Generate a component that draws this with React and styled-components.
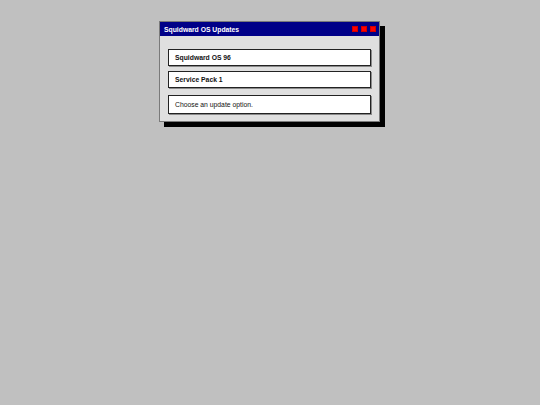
import React from 'react';
import styled, { createGlobalStyle } from 'styled-components';

const GlobalStyle = createGlobalStyle`
    html, body {
        margin: 0;
        padding: 0;
        background-color: #c0c0c0;
        font-family: "Liberation Sans", Arial, sans-serif;
    }
`;

const Page = styled.div`
    width: 540px;
    height: 405px;
    padding: 21px 0 0 159px;
    box-sizing: border-box;
`;

const Window = styled.div`
    width: 221px;
    box-sizing: border-box;
    background-color: #dfdfdf;
    border: 1px solid #7a7a7a;
    box-shadow: 5px 5px 0 #000;
`;

const TitleBar = styled.div`
    display: flex;
    justify-content: space-between;
    align-items: center;
    height: 14px;
    padding: 0 3px 0 4px;
    background-color: #000088;
    color: white;
    font-size: 6.8px;
    font-weight: bold;
`;

const Controls = styled.div`
    display: flex;
    gap: 3px;
`;

const Control = styled.span`
    width: 6px;
    height: 6px;
    background-color: #ff0000;
    box-shadow: inset 0 0 0 1px #d00000;
`;

const Body = styled.div`
    display: flex;
    flex-direction: column;
    gap: 5px;
    padding: 13px 8px 7px 8px;
`;

const Box = styled.div`
    display: flex;
    align-items: center;
    box-sizing: border-box;
    padding: 0 6px;
    background-color: white;
    border: 1px solid #222;
    box-shadow: 1px 1px 0 #8a8a8a;
    font-size: 6.8px;
    color: #111;
    font-weight: ${props => (props.bold ? 'bold' : 'normal')};
    margin-top: ${props => (props.spaced ? '2px' : '0')};
    height: ${props => (props.spaced ? '19px' : '17px')};
    cursor: ${props => (props.bold ? 'pointer' : 'default')};
`;

const options = ['Squidward OS 96', 'Service Pack 1'];

const App = () => {
    return (
        <>
            <GlobalStyle />
            <Page>
                <Window>
                    <TitleBar>
                        <span>Squidward OS Updates</span>
                        <Controls>
                            <Control />
                            <Control />
                            <Control />
                        </Controls>
                    </TitleBar>
                    <Body>
                        {options.map(o => (
                            <Box bold key={o}>{o}</Box>
                        ))}
                        <Box spaced>Choose an update option.</Box>
                    </Body>
                </Window>
            </Page>
        </>
    );
};

export default App;
